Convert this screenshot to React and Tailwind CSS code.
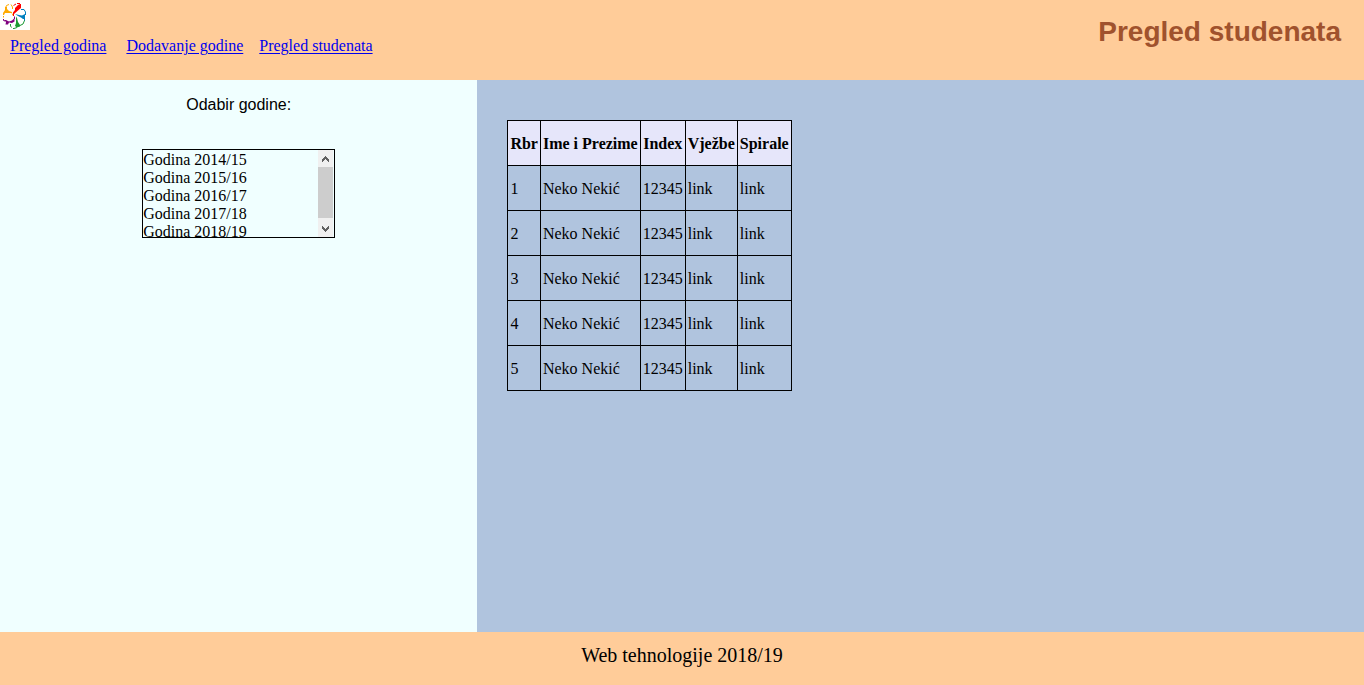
import { useRef } from "react";

const navLinks = [
  { label: "Pregled godina", spacing: "mr-5" },
  { label: "Dodavanje godine", spacing: "mr-4" },
  { label: "Pregled studenata", spacing: "" },
];

const years = ["2014/15", "2015/16", "2016/17", "2017/18", "2018/19"];

const columns = ["Rbr", "Ime i Prezime", "Index", "Vježbe", "Spirale"];

const students = [1, 2, 3, 4, 5].map((n) => [n, "Neko Nekić", "12345", "link", "link"]);

function Logo() {
  return (
    <svg viewBox="0 0 30 30" className="block size-[30px] bg-white" role="img" aria-label="Logo" fill="none">
      <path d="M5 7H7V9L9 11L12 12V13L9 13L5 13L4 15H3V13L5 10Z" fill="#ffaa00" />
      <path d="M5.500 8L6.500 5.500L9 4.500M11 4.500L12.500 7V9M12 13.500L13.500 16M3.500 16V17.500" stroke="#ffaa00" />
      <path d="M18 5L20 4H21V8L18 10.500L14 14H13V12.500L15 10V8Z" fill="#f00" />
      <path d="M13.500 5.500L16 4M17 3.500H20M13.500 14V16" stroke="#f00" />
      <path d="M15 14L19 15L22 15.500L25 14V19H23L21 17.500L18 16Z" fill="#0080c0" />
      <path d="M21 9.500L24 9.500L25.500 12V15M24.500 19V21" stroke="#0080c0" />
      <path d="M16 16.500L17 18L18 22L20 25V26.500L17 27.500L15 26L16 23Z" fill="#1b9a32" />
      <path d="M24.500 20.500L23 24L20 25.500M17 27.500L14 28.500H13M11.500 27.500L10.500 26V24" stroke="#1b9a32" />
      <path d="M4 20H6L9 21.500L12 20.500L14.500 18V21.500L12 23L9 22.500L8 24.500H5.500L6 22Z" fill="#800080" />
      <path d="M3.500 19V20.500L5 21M14.500 16.500V19" stroke="#800080" />
    </svg>
  );
}

function YearList() {
  const list = useRef(null);
  const scroll = (top) => list.current?.scrollBy({ top });
  return (
    <div className="mx-auto mt-[33px] flex h-[89px] w-[193px] border border-black pr-px">
      <ul ref={list} aria-labelledby="year-label" className="grow overflow-hidden pt-px leading-[18px]">
        {years.map((year) => (
          <li key={year}>Godina {year}</li>
        ))}
      </ul>
      <div className="flex w-[15px] flex-col bg-[#f0f0f0]">
        <button type="button" aria-label="Gore" onClick={() => scroll(-18)} className="flex h-[17px] items-center justify-center">
          <svg viewBox="0 0 7 6" className="h-[6px] w-[7px]" fill="#606060" shapeRendering="crispEdges">
            <path d="M3 0H4V1H5V2H6V3H7V6H6V5H5V4H4V3H3V4H2V5H1V6H0V3H1V2H2V1H3Z" />
          </svg>
        </button>
        <div className="grow bg-[#cdcdcd]" />
        <button type="button" aria-label="Dolje" onClick={() => scroll(18)} className="flex h-[19px] items-center justify-center pt-[2px]">
          <svg viewBox="0 0 7 6" className="h-[6px] w-[7px]" fill="#606060" shapeRendering="crispEdges">
            <path d="M0 0H1V1H2V2H3V3H4V2H5V1H6V0H7V3H6V4H5V5H4V6H3V5H2V4H1V3H0Z" />
          </svg>
        </button>
      </div>
    </div>
  );
}

export default function App() {
  return (
    <div className="flex min-h-screen flex-col font-['Liberation_Serif',serif] text-base text-black">
      <header className="flex h-20 justify-between bg-[#ffcc99]">
        <div>
          <Logo />
          <nav className="flex pl-[10px] pt-1">
            {navLinks.map(({ label, spacing }) => (
              <a key={label} href="#" className={`text-[#0000ee] underline underline-offset-2 ${spacing}`}>
                {label}
              </a>
            ))}
          </nav>
        </div>
        <h1 className="pr-[23px] pt-4 font-['Liberation_Sans',sans-serif] text-[28px] leading-8 font-bold text-[#a0522d]">
          Pregled studenata
        </h1>
      </header>
      <main className="flex grow">
        <section className="w-[35%] bg-[#f0ffff] pt-[14px]">
          <h2 id="year-label" className="text-center font-['Liberation_Sans',sans-serif] text-base leading-[22px]">
            Odabir godine:
          </h2>
          <YearList />
        </section>
        <section className="grow bg-[#b0c4de] pl-[30px] pt-10">
          <table className="border-collapse">
            <thead>
              <tr className="h-[45px] bg-[#e6e6fa]">
                {columns.map((column) => (
                  <th key={column} scope="col" className="border border-black px-[2px] pt-[2px]">
                    {column}
                  </th>
                ))}
              </tr>
            </thead>
            <tbody>
              {students.map((row) => (
                <tr key={row[0]} className="h-[45px]">
                  {row.map((cell, i) => (
                    <td key={i} className="border border-black px-[2px] pt-[2px]">
                      {cell}
                    </td>
                  ))}
                </tr>
              ))}
            </tbody>
          </table>
        </section>
      </main>
      <footer className="h-[53px] bg-[#ffcc99] pt-[11px] text-center text-xl leading-6">
        Web tehnologije 2018/19
      </footer>
    </div>
  );
}
